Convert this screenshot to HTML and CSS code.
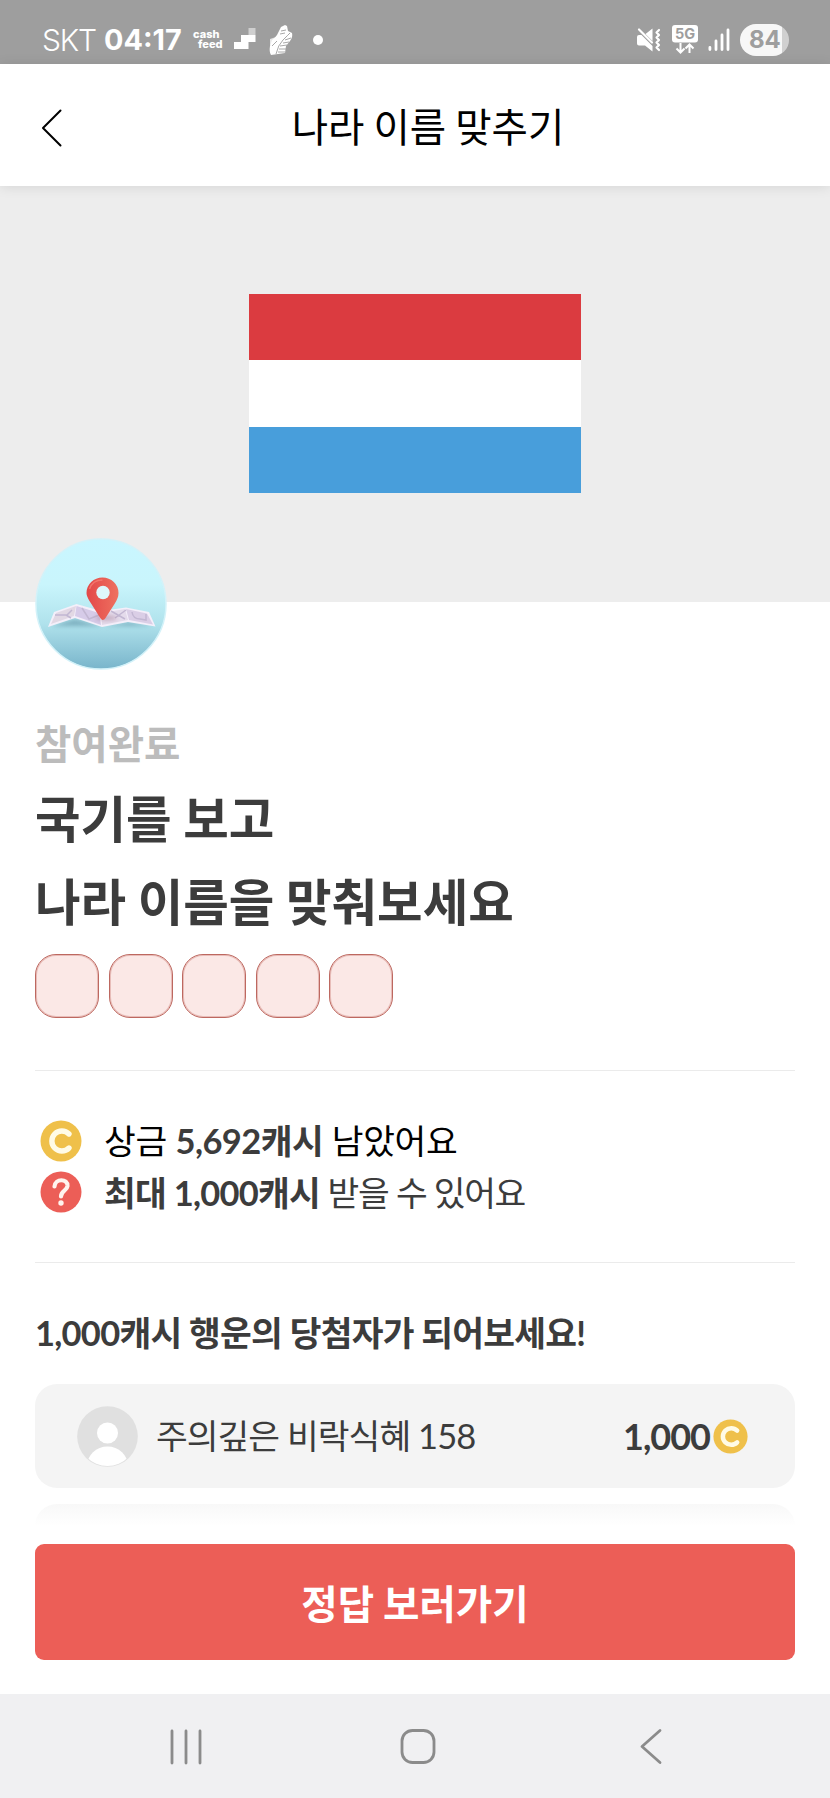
FILE: index.html
```html
<!DOCTYPE html>
<html lang="ko">
<head>
<meta charset="utf-8">
<title>나라 이름 맞추기</title>
<link rel="stylesheet" href="styles.css">
</head>
<body>
<div class="status">
  <span class="carrier">SKT</span>
  <span class="clock">04:17</span>
  <span class="cashfeed"><span>cash</span><span class="feed">feed</span></span>
  <svg class="steps" width="24" height="24" viewBox="0 0 24 24"><path fill="#fff" d="M1 21V14H8V7H15.500V7H22.500V14H15.500V21Z"/><path fill="#fff" opacity=".5" d="M15.500 0H22.500V7H15.500Z"/></svg>
  <svg class="shoe" width="26" height="32" viewBox="0 0 26 32"><path fill="#fff" opacity=".75" d="M2 15L8 13L9 18L5 23L2 21Z"/><path fill="#fff" d="M4 16Q7 14 9 11L13 3L17 1L19 2L20 7L24 9Q25 13 22 17L18 22L17 29L3 31Q1 28 2 22Z"/><g fill="none" stroke="#9e9e9e" stroke-width=".9"><path d="M8 30Q10 21 15 16T22 9M12 10L17 9M13 7L18 6M17 16L23 14M15 19L21 18M12 22L19 21M11 25L18 25M10 28L17 28M4 22L9 17"/></g></svg>
  <i class="dot"></i>
  <div class="tray">
    <svg width="24" height="26" viewBox="0 0 24 26"><path fill="#fff" d="M0 10Q0 8 2 8H4.500L15.500 19V24.500L8 18.500H2Q0 18.500 0 16.500ZM8.500 7L15.500 1.500V14Z"/><path fill="none" stroke="#fff" stroke-width="2.200" stroke-linecap="round" stroke-linejoin="round" d="M2 2.500L15 15.500M22 3L19.500 5.500L22 8L19.500 10.500L22 13L19.500 15.500L22 18L19.500 20.500L22 23"/></svg>
    <svg class="fiveg" width="26" height="30" viewBox="0 0 26 30"><rect width="26" height="17.500" rx="3" fill="#fff"/><text x="13" y="14.300" text-anchor="middle" class="fiveg-text">5G</text><path fill="none" stroke="#fff" stroke-width="2" d="M8.500 18V27M4.500 23.500L8.500 27.500L12.500 23.500M17.500 28V19.500M13.500 23.500L17.500 19.500L21.500 23.500"/></svg>
    <svg class="signal" width="22" height="24" viewBox="0 0 22 24"><path stroke="#fff" stroke-width="2.800" stroke-linecap="round" d="M1.900 19.500V21.500M8 13V21.500M14 7V21.500M20 2V21.500"/></svg>
    <span class="battery">84</span>
  </div>
</div>
<header class="header">
  <svg class="back" width="22" height="38" viewBox="0 0 22 38"><path d="M19.500 1.500L2 19L19.500 36.500" fill="none" stroke="#000" stroke-width="2" stroke-linecap="round" stroke-linejoin="round"/></svg>
  <h1 class="title">나라 이름 맞추기</h1>
</header>
<section class="hero">
  <div class="flag"><i class="red"></i><i class="white"></i><i class="blue"></i></div>
  <svg class="badge" width="132" height="132" viewBox="0 0 132 132">
    <defs>
      <linearGradient id="sky" x2="0" y2="1"><stop offset="0" stop-color="#c9f6ff"/><stop offset=".35" stop-color="#c9f5fc"/><stop offset=".65" stop-color="#b0e2ec"/><stop offset="1" stop-color="#79b5cb"/></linearGradient>
      <linearGradient id="pin"><stop offset="0" stop-color="#e34848"/><stop offset="1" stop-color="#ee7160"/></linearGradient>
      <filter id="soft" x="-20%" y="-100%" width="140%" height="300%"><feGaussianBlur stdDeviation="2"/></filter>
    </defs>
    <circle cx="66" cy="66" r="65" fill="url(#sky)" stroke="#d3f2f9" stroke-width="1.500"/>
    <path d="M16 88L40 81L68 88L94 84L118 88Z" fill="#5d91a5" opacity=".6" filter="url(#soft)"/>
    <path d="M13 89L19 74L41.500 66L66 73L91 69.500L114 74L120.500 88.500L93 84L67 89L40 80Z" fill="#f4effa"/>
    <path d="M16 86L21 75L41 68L39 78Z" fill="#e2d8e4"/><path d="M41.500 68L64 75L66 87L40 78Z" fill="#d6cbe8"/><path d="M67 75L90 71L93 82L67 87Z" fill="#e4dbeb"/><path d="M91 71L112 75.500L118 86.500L94 82Z" fill="#dacee6"/>
    <path d="M20 77L32 77L37 72M31 77L36 80M47 70L54 81L64 77M76 73L90 81M80 80L91 72M97 74Q98 81 105 81L111 82L111 76" fill="none" stroke="#c2b7d2" stroke-width="1.500"/>
    <ellipse cx="71" cy="80" rx="11" ry="2.500" fill="#a37991" opacity=".5" filter="url(#soft)"/>
    <path d="M67.500 82Q65.500 81 61.500 74L54.500 63Q51.500 58 51.500 55A16 15.500 0 0 1 83.500 55Q83.500 60 79.500 66L70.500 80Q69.500 82 67.500 82Z" fill="url(#pin)"/>
    <path d="M54.500 51Q57.500 42 67.500 42" fill="none" stroke="#f88377" stroke-width="1.500" opacity=".7"/>
    <circle cx="68" cy="54.500" r="6.700" fill="#def8fc"/>
  </svg>
</section>
<main class="content">
  <p class="state">참여완료</p>
  <h2 class="question">국기를 보고<br>나라 이름을 맞춰보세요</h2>
  <div class="answer"><i></i><i></i><i></i><i></i><i></i></div>
  <div class="info">
    <div class="line"><svg width="42" height="42" viewBox="0 0 42 42"><circle cx="21" cy="21" r="20.500" fill="#efc04a"/><path d="M29 14A10 10 0 1 0 29 28" fill="none" stroke="#fffbe6" stroke-width="5.400" stroke-linecap="round"/></svg><span class="prize">상금 <b>5,692캐시</b> 남았어요</span></div>
    <div class="line"><svg width="42" height="42" viewBox="0 0 42 42"><circle cx="21" cy="21" r="20.500" fill="#ec5e57"/><path d="M14.500 15.500C15 7 28 7.500 27.500 15C27 20 21 19.500 21 25.500" fill="none" stroke="#fff4ee" stroke-width="4.200" stroke-linecap="round"/><circle cx="21" cy="32" r="2.700" fill="#fff4ee"/></svg><span class="max"><b>최대 1,000캐시</b> 받을 수 있어요</span></div>
  </div>
  <h3 class="lucky">1,000캐시 행운의 당첨자가 되어보세요!</h3>
  <div class="winner">
    <svg class="person" width="61" height="61" viewBox="0 0 61 61"><defs><clipPath id="face"><circle cx="30.500" cy="30.500" r="29.500"/></clipPath></defs><circle cx="30.500" cy="30.500" r="30.300" fill="#e0e0e0"/><g fill="#fff" clip-path="url(#face)"><circle cx="30.500" cy="27" r="10.500"/><ellipse cx="30.500" cy="60" rx="20.500" ry="19.500"/></g></svg>
    <span class="name">주의깊은 비락식혜 158</span>
    <b class="amount">1,000</b>
    <svg width="35" height="35" viewBox="0 0 42 42"><circle cx="21" cy="21" r="20.500" fill="#efc04a"/><path d="M29 14A10 10 0 1 0 29 28" fill="none" stroke="#fffbe6" stroke-width="5.400" stroke-linecap="round"/></svg>
  </div>
  <div class="next"></div>
  <button class="cta">정답 보러가기</button>
</main>
<nav class="nav">
  <svg width="32" height="38" viewBox="0 0 32 38"><path d="M2 3V35M16 3V35M30 3V35" stroke="#8b8b8b" stroke-width="2.800" stroke-linecap="round"/></svg>
  <svg class="home" width="36" height="38" viewBox="0 0 36 38"><rect x="2" y="2.500" width="32" height="32" rx="10.500" fill="none" stroke="#8b8b8b" stroke-width="2.800"/></svg>
  <svg width="22" height="38" viewBox="0 0 22 38"><path d="M20 2.500L2 18.500L20 34.500" fill="none" stroke="#8b8b8b" stroke-width="2.800" stroke-linecap="round" stroke-linejoin="round"/></svg>
</nav>
</body>
</html>
```
FILE: styles.css
```css
* { box-sizing: border-box; margin: 0; padding: 0; }
body { width: 830px; height: 1798px; display: flex; flex-direction: column; background: #fff; color: #3c3c3c; font-family: "Noto Sans CJK KR", sans-serif; overflow: hidden; }
svg { display: block; flex: none; }
i { display: block; }
.status { height: 64px; background: #9e9e9e; color: #fff; display: flex; align-items: center; padding: 15px 41px 0 42px; white-space: nowrap; }
.carrier { font: 30px/40px Inter, sans-serif; font-weight: 300; letter-spacing: -1.200px; width: 62px; }
.clock { font: 700 28.800px/40px Inter, sans-serif; width: 89px; }
.cashfeed { display: flex; flex-direction: column; font: 800 11px/9.500px Inter, sans-serif; width: 40px; }
.feed { padding-left: 5px; }
.shoe { margin-left: 11px; }
.dot { width: 10px; height: 10px; border-radius: 50%; background: #fff; margin-left: 19px; }
.tray { margin-left: auto; display: flex; align-items: center; }
.fiveg { margin-left: 11px; }
.fiveg-text { font: 700 14.500px Inter, sans-serif; fill: #9e9e9e; }
.signal { margin-left: 10px; }
.battery { margin-left: 10px; width: 49px; height: 32px; border-radius: 16px; background: linear-gradient(90deg, #f7f7f7 42px, #d0d0d0 42px); color: #9e9e9e; font: 700 24px/32px Inter, sans-serif; padding-left: 9px; }
.header { position: relative; z-index: 1; height: 122px; background: #fff; box-shadow: 0 1px 12px rgba(0,0,0,.1); display: flex; align-items: center; padding: 5px 0 0 41px; color: #000; }
.title { flex: 1; font-size: 39.500px; font-weight: 400; line-height: 60px; text-align: center; padding: 0 37px 5px 0; word-spacing: -2px; }
.hero { position: relative; height: 416px; background: #ededed; padding: 108px 249px 0; }
.flag { height: 199px; display: grid; grid-template-rows: repeat(3, 1fr); }
.red { background: #db3b40; }
.white { background: #fff; }
.blue { background: #489edb; }
.badge { position: absolute; left: 35px; top: 352px; }
.content { height: 1092px; padding: 111px 35px 0; }
.state { font-size: 39.500px; font-weight: 700; line-height: 58px; color: #bcbcbc; }
.question { font-size: 49.500px; font-weight: 700; line-height: 83px; padding-top: 4px; word-spacing: -2.200px; }
.answer { display: flex; gap: 9.500px; padding-top: 13px; }
.answer i { width: 64px; height: 64px; border: 1px solid #bd6860; border-radius: 21px; background: #fbe8e6; box-shadow: inset 0 0 0 1px rgba(197,108,99,.35); }
.info { height: 193px; margin-top: 52px; border: solid #ebebeb; border-width: 1.500px 0; padding: 44px 0 0 5px; display: flex; flex-direction: column; }
.line { height: 51.500px; display: flex; align-items: center; gap: 22px; font: 34.500px/50px Lato, "Noto Sans CJK KR", sans-serif; white-space: nowrap; }
.line span { padding-top: 1px; }
.prize { color: #000; letter-spacing: -.300px; }
.line .prize b { color: #3c3c3c; letter-spacing: -.550px; }
.max { letter-spacing: -1.330px; }
.line b, .lucky { letter-spacing: -.740px; }
.name, .amount { letter-spacing: -1px; }
.lucky { font: 700 34.500px/50px Lato, "Noto Sans CJK KR", sans-serif; margin-top: 45px; white-space: nowrap; }
.winner { height: 104px; margin-top: 26px; border-radius: 22px; background: #f4f4f4; display: flex; align-items: center; padding: 0 47px 0 42px; }
.name { font: 34.500px/50px Lato, "Noto Sans CJK KR", sans-serif; margin-left: 18px; flex: 1; letter-spacing: -.950px; }
.amount { font: 700 36px/50px Lato, sans-serif; margin-right: 3px; }
.next { height: 24px; margin-top: 16px; border-radius: 22px 22px 0 0; background: linear-gradient(#f8f8f8, #fff 22px); }
.cta { display: block; width: 760px; height: 116px; margin-top: 16px; border: 0; border-radius: 9px; background: #ec5e57; color: #fff; font: 700 39.600px/60px "Noto Sans CJK KR", sans-serif; word-spacing: -2.300px; }
.nav { height: 104px; background: #f0f0f2; display: flex; align-items: center; padding: 2px 168px 0 170px; justify-content: space-between; }
.home { margin-right: 7px; }
```
